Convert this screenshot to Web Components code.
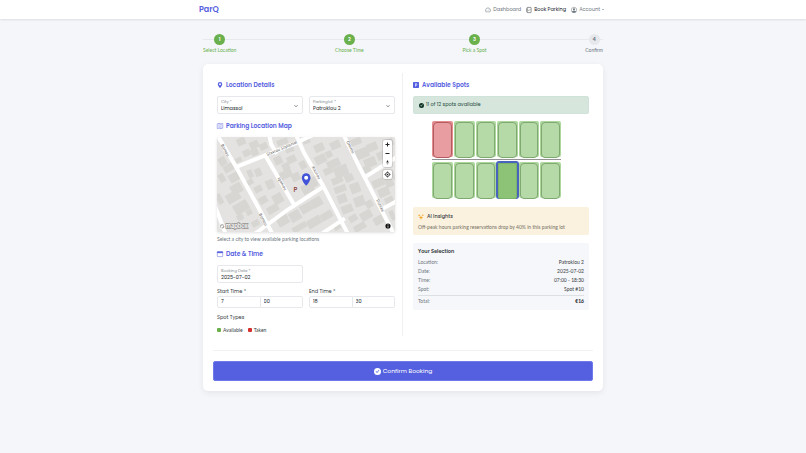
<!DOCTYPE html>
<html lang="en">
<head>
<meta charset="utf-8">
<meta name="viewport" content="width=device-width, initial-scale=1">
<title>ParQ – Book Parking</title>
<style>
:root{--brand:#5560e0;--green:#6ab04c;--red:#d32f2f;--ink:#343a40;--muted:#6c757d;--line:#e6e8ec;--small:Lato,"Open Sans",sans-serif}
*{box-sizing:border-box}
body{margin:0;min-height:100vh;background:#f4f6fa;color:var(--ink);font:5px/8px Poppins,Inter,"Open Sans",sans-serif}
</style>
</head>
<body>
<pq-page></pq-page>
<script>
const define=(name,css,html,setup)=>{
  const t=document.createElement('template');
  t.innerHTML=`<style>*{box-sizing:border-box}:host{display:block}${css}</style>${html}`;
  customElements.define(name,class extends HTMLElement{
    connectedCallback(){
      if(this.shadowRoot)return;
      const root=this.attachShadow({mode:'open'});
      root.append(t.content.cloneNode(true));
      root.querySelectorAll('[data-attr]').forEach(e=>e.textContent=this.getAttribute(e.dataset.attr));
      if(setup)setup(root,this);
    }
  });
};

/* 16x16 icon set */
const icons={
  gauge:'<path d="M2.5 13a6.800 6.800 0 1 1 11 0z" fill="none" stroke="currentColor" stroke-width="1.300"/><path d="M8 9.500l3-3M8 4v1.500M4 8.500h1.200M11 8.500h1.200" stroke="currentColor" stroke-width="1.200"/>',
  journal:'<rect x="2.700" y="1" width="11" height="14" rx="1.500" fill="none" stroke="currentColor" stroke-width="1.300"/><path d="M1 5h3M1 8h3M1 11h3M6.200 8l1.600 1.600L11 6.400" fill="none" stroke="currentColor" stroke-width="1.300"/>',
  person:'<circle cx="8" cy="8" r="7.300" fill="none" stroke="currentColor" stroke-width="1.300"/><circle cx="8" cy="6.300" r="2.800" fill="currentColor"/><path d="M2.500 12.500C3.500 10.500 5 10 8 10s4.500.5 5.500 2.500A7.300 7.300 0 0 1 8 15.300a7.300 7.300 0 0 1-5.500-2.800z" fill="currentColor"/>',
  pin:'<path fill="currentColor" fill-rule="evenodd" d="M8 16s6-5.700 6-10A6 6 0 0 0 2 6c0 4.300 6 10 6 10zm0-7.500a2.700 2.700 0 1 0 0-5.400 2.700 2.700 0 0 0 0 5.400z"/>',
  map:'<path d="M.7 2.200l4.800-1 5 1 4.800-1v12.600l-4.800 1-5-1-4.800 1zM5.500 1.200v12.600M10.500 2.200v12.600" fill="none" stroke="currentColor" stroke-width="1.200" stroke-linejoin="round"/>',
  calendar:'<rect x=".8" y="1.800" width="14.400" height="13.200" rx="1.600" fill="none" stroke="currentColor" stroke-width="1.300"/><path d="M1 2h14v3H1zM3.500 0v2M12.500 0v2" fill="currentColor" stroke="currentColor"/>',
  parking:'<path fill="currentColor" fill-rule="evenodd" d="M2 0h12a2 2 0 0 1 2 2v12a2 2 0 0 1-2 2H2a2 2 0 0 1-2-2V2a2 2 0 0 1 2-2zm3.500 4v8.200h1.600V9.500h1.600c3.700 0 3.700-5.500 0-5.500zm1.600 1.300h1.300c1.800 0 1.800 2.900 0 2.900H7.100z"/>',
  check:'<path fill="currentColor" fill-rule="evenodd" d="M8 0a8 8 0 1 1 0 16A8 8 0 0 1 8 0zm4.200 5-1-.9-4.200 5-2.300-2.200-1 1 3.400 3.400z"/>',
  spark:'<path fill="currentColor" d="M8 4l1.600 3.800L14 9.500l-4.400 1.600L8 16l-1.600-4.900L2 9.500l4.400-1.700zM3 0l1 2.500L7 3.500 4 4.500 3 7.500 2 4.500 0 3.500l2-1zM13 0l.9 2L16 3l-2.100.9L13 6l-.9-2.100L10 3l2.100-1z"/>'
};
define('pq-icon',`:host{display:inline-block;flex:none;width:var(--size,6px);height:var(--size,6px)}svg{display:block;width:100%;height:100%;overflow:visible}`,
 `<svg viewBox="0 0 16 16" aria-hidden="true"></svg>`,(r,h)=>r.querySelector('svg').innerHTML=icons[h.getAttribute('name')]);

define('pq-nav',`:host{background:#fff;box-shadow:0 1px 2px #0000001a}
nav{display:flex;align-items:center;justify-content:space-between;max-width:408px;height:19px;margin:0 auto;padding-right:3px}
a{color:inherit;text-decoration:none;display:flex;align-items:center;gap:2px}
.brand{font-size:8px;font-weight:600;color:var(--brand)}
.links{display:flex;gap:5px;font-size:5px;color:var(--muted)}
.on{color:#212529}
.caret{border:1px solid transparent;border-top-color:currentColor;margin-top:1px}`,
`<nav><a class="brand" href="#">ParQ</a><div class="links">
<a href="#"><pq-icon name="gauge"></pq-icon>Dashboard</a>
<a href="#" class="on"><pq-icon name="journal"></pq-icon>Book Parking</a>
<a href="#"><pq-icon name="person"></pq-icon>Account<span class="caret"></span></a></div></nav>`);

define('pq-step',`:host{display:grid;justify-items:center;gap:2px;color:var(--green)}
b{display:grid;place-items:center;width:11px;height:11px;border-radius:50%;background:var(--green);color:#fff;font-weight:600}
span{font:5px/7px var(--small)}
:host([pending]){color:var(--muted)}:host([pending]) b{background:#e6e8ec;color:var(--muted)}`,
`<b data-attr="n"></b><span><slot></slot></span>`);
define('pq-steps',`:host{display:flex;justify-content:space-between;background:linear-gradient(#e6e9ed,#e6e9ed) 0 5px/100% 1px no-repeat}`,`<slot></slot>`);

define('pq-heading',`h2{display:flex;align-items:center;gap:3px;margin:0;font-size:6px;line-height:10px;font-weight:600;color:var(--brand)}`,
`<h2><pq-icon></pq-icon><slot></slot></h2>`,(r,h)=>{const i=document.createElement('pq-icon');i.setAttribute('name',h.getAttribute('icon'));r.querySelector('pq-icon').replaceWith(i)});

const box=`.box{display:grid;height:18px;padding:2px 4px 2px 3px;border:1px solid var(--line);border-radius:2px;background:#fff}
label{font-size:4px;line-height:6px;color:#80868c}
select,input{width:100%;min-width:0;height:7px;padding:0;border:0;outline:0;background:none;appearance:none;color:#212529;font:5px/7px Poppins,Inter,"Open Sans",sans-serif}`;
define('pq-select',box+`.box{grid-template-columns:1fr auto;align-items:center}label,select{grid-column:1}svg{grid-area:1/2/3/3;width:4px;height:4px}`,
`<div class="box"><label for="f" data-attr="label"></label><select id="f"><option data-attr="value"></option></select><svg viewBox="0 0 16 16" aria-hidden="true"><path d="M2 5l6 6 6-6" fill="none" stroke="#343a40" stroke-width="2.500"/></svg></div>`);
define('pq-field',box,`<div class="box"><label for="f" data-attr="label"></label><input id="f"></div>`,(r,h)=>r.querySelector('input').value=h.getAttribute('value'));
define('pq-time',`label{display:block;line-height:8px}i{font-style:normal;color:var(--muted)}
div{display:flex}input{flex:1;min-width:0;width:0;height:12px;padding:0 3px;border:1px solid var(--line);border-radius:2px 0 0 2px;outline:0;color:#212529;background:#fff;font:5px/8px Poppins,Inter,"Open Sans",sans-serif}
input+input{border-left:0;border-radius:0 2px 2px 0}`,
`<label for="h"><slot></slot> <i>*</i></label><div><input id="h" aria-label="Hour"><input aria-label="Minute"></div>`,
(r,h)=>{const [a,b]=r.querySelectorAll('input');a.value=h.getAttribute('hour');b.value=h.getAttribute('minute')});

/* building footprints: x y width height angle */
const buildings=[[60,3,26,22,-24],[98,12,28,22,-24],[128,18,24,20,-24],[78,38,22,20,-24],[102,34,22,22,-24],[55,62,20,14,-24],[20,82,30,22,-30],[36,108,32,26,-30],[6,60,22,26,-30],[42,140,34,30,-30],[28,165,42,30,-30],[50,195,46,32,-30],[6,110,18,26,-30],[0,170,16,32,-30],[60,232,20,18,-30],[88,218,18,16,-30],[104,250,24,18,-30],[92,98,16,24,-24],[114,94,20,24,-24],[86,128,24,16,-30],[112,146,24,20,-28],[126,178,26,22,-30],[150,205,36,22,-30],[168,170,30,30,-30],[148,128,24,28,-24],[180,6,34,18,-20],[205,26,26,20,-20],[172,58,24,24,-26],[196,78,22,22,-26],[210,56,28,22,-26],[188,100,38,24,-26],[224,108,26,24,-26],[248,72,20,24,-28],[254,140,36,28,-28],[280,120,20,30,-28],[180,235,36,30,-30],[218,222,34,30,-30],[250,200,36,26,-30],[282,182,34,28,-30],[225,262,46,18,-30],[270,242,44,26,-30],[310,225,38,22,-30],[258,4,22,16,-20],[292,20,30,24,-24],[294,54,34,26,-26],[326,42,20,20,-26],[340,12,30,24,-24],[330,68,40,24,-24],[320,92,28,20,-26],[352,86,42,34,-20],[344,120,34,20,-24],[384,112,26,22,-24],[352,146,36,20,-20],[400,138,30,30,-20],[362,172,28,26,-20],[412,178,32,30,-20],[374,204,34,24,-20],[446,190,22,22,-30],[396,234,26,20,-30],[430,222,36,26,-30],[470,238,30,24,-30],[410,260,38,20,-30],[350,258,20,20,-30],[400,4,34,20,-22],[416,34,40,30,-22],[442,62,36,28,-22],[450,18,32,24,-22],[480,44,26,24,-22],[500,6,30,22,-22],[440,86,22,20,-22],[466,126,36,24,-24],[484,152,34,26,-24],[505,180,26,24,-24],[505,122,24,28,-24],[524,100,10,30,-24],[520,220,14,30,-24]];
define('pq-map',`:host{position:relative;height:95px;border-radius:2px;overflow:hidden;background:#e4e3e1;box-shadow:0 1px 3px #0000001f}
.map{display:block;width:100%;height:100%}
.ctl{position:absolute;top:3px;right:3px;display:grid;gap:3px}
.grp{display:grid;border-radius:2px;background:#fff;box-shadow:0 0 0 1px #0000001a}
button{display:grid;place-items:center;width:9px;height:9px;padding:0;border:0;background:none}
button svg{width:7px;height:7px}
.info{position:absolute;right:4px;bottom:3px;width:6px;height:6px}.info svg{width:6px;height:6px}`,
`<svg class="map" viewBox="0 0 535 285" preserveAspectRatio="xMidYMid slice" role="img" aria-label="Map of the parking location">
<rect width="535" height="285" fill="#e4e3e1"/><g id="b" fill="#d7d6d3"></g>
<g fill="none" stroke="#fff" stroke-width="12"><path d="M-4-15 58 90 120 203 172 300M58 90 145 55 240 17 300-12M156-10 163 22 180 50M145 55 230 200M238-5 262 48 318 145 398 300M318 150 210 220 105 297M384 244 300 300M376-15 430 95 536 300M448 118 540 60M492 218 540 192M-6 205 28 295"/></g>
<g font-family="Inter,sans-serif" font-size="12" fill="#55534f" stroke="#fff" stroke-width="2" paint-order="stroke">
<text transform="translate(12 24) rotate(62)">Bomou</text><text transform="translate(126 232) rotate(62)">Bomou</text>
<text transform="translate(151 57) rotate(-23)">Stavrou Stylianidi</text>
<text transform="translate(183 124) rotate(62)">Igoniou</text><text transform="translate(284 89) rotate(62)">Xouriou</text>
<text transform="translate(388 14) rotate(63)">Omirou</text><text transform="translate(478 190) rotate(63)">Dunias</text></g>
<text x="230" y="166" font-family="Inter,sans-serif" font-size="18" font-weight="600" fill="#8c4343">P</text>
<path d="M268 146s-13-13-13-24a13 13 0 0 1 26 0c0 11-13 24-13 24z" fill="#4353d8"/><circle cx="268" cy="122" r="6" fill="#fff"/>
<circle cx="16" cy="268" r="8" fill="#a5a4a1" stroke="#fff" stroke-width="3"/><path d="M12 272c-1-6 3-9 8-7-1 5-4 8-8 7z" fill="#fff"/><text x="27" y="274" font-family="Inter,sans-serif" font-size="17" font-weight="600" fill="#fff" stroke="#8f8e8b" stroke-width="4" paint-order="stroke">mapbox</text></svg>
<div class="ctl"><div class="grp">
<button aria-label="Zoom in"><svg viewBox="0 0 14 14"><path d="M7 3v8M3 7h8" stroke="#222" stroke-width="2"/></svg></button>
<button aria-label="Zoom out"><svg viewBox="0 0 14 14"><path d="M3 7h8" stroke="#222" stroke-width="2"/></svg></button>
<button aria-label="Reset bearing"><svg viewBox="0 0 14 14"><path d="M4.500 7 7 2l2.500 5z" fill="#222"/><path d="M4.500 7.500 7 12l2.500-4.500z" fill="#aaa"/></svg></button></div>
<div class="grp"><button aria-label="Find my location"><svg viewBox="0 0 14 14"><circle cx="7" cy="7" r="4" fill="none" stroke="#222" stroke-width="1.500"/><circle cx="7" cy="7" r="1.700" fill="#222"/><path d="M7 1v2M7 11v2M1 7h2M11 7h2" stroke="#222" stroke-width="1.500"/></svg></button></div></div>
<button class="info" aria-label="Attribution"><svg viewBox="0 0 14 14"><circle cx="7" cy="7" r="6" fill="#111"/><path d="M7 3v2M7 6v5" stroke="#fff" stroke-width="1.600"/></svg></button>`,
r=>{r.querySelector('#b').innerHTML=buildings.map(([x,y,w,h,a])=>`<rect x="${x}" y="${y}" width="${w}" height="${h}" transform="rotate(${a} ${x+w/2} ${y+h/2})"/>`).join('')});

define('pq-legend',`:host{display:flex;align-items:center;gap:5px;font-family:var(--small)}span{display:flex;align-items:center;gap:2px}span::before{content:"";width:4px;height:4px;border-radius:1px;background:var(--green)}.t::before{background:var(--red)}`,`<span>Available</span><span class="t">Taken</span>`);

define('pq-alert',`:host{display:flex;align-items:center;gap:2px;height:18px;padding:0 5px;border:1px solid #cfe3da;border-radius:2px;background:#d6e6dd;color:#23493a}pq-icon{color:#0d3325;--size:5px}`,`<pq-icon name="check"></pq-icon><span><slot></slot></span>`);

define('pq-spots',`:host{width:73%;margin-left:11%}
.row{display:grid;grid-template-columns:repeat(6,1fr);gap:1px}
.row+.row{margin-top:2px;padding-top:2px;border-top:1px solid #929295}
button{height:36px;padding:1px;border:0;border-radius:2px;background:#aed79e}
button::before{content:"";display:block;height:100%;border:1px solid #7ea971;border-radius:4px;background:#b6d9a8}
.taken{background:#e58e92}.taken::before{border-color:#b65a61;background:#e89da0}
.sel{border:1px solid #4964bd;box-shadow:0 0 0 1px #4964bd;padding:0;background:#8ac274}.sel::before{background:#8dc377;border-color:#7cb36a;border-radius:2px}`,``,
r=>{for(let j=0;j<2;j++){const row=document.createElement('div');row.className='row';for(let i=1;i<7;i++){const n=j*6+i,b=document.createElement('button');b.type='button';b.setAttribute('aria-label','Spot '+n);b.className=n===1?'taken':n===10?'sel':'';row.append(b)}r.append(row)}});

define('pq-insight',`:host{padding:5px 5px 4px;border-radius:2px;background:#fbf1df}h3{display:flex;align-items:center;gap:3px;margin:0;font-size:5px;line-height:9px;font-weight:500}pq-icon{color:#f4a62a}p{margin:2px 0 0;font:5px/8px var(--small);color:#71705f}`,
`<h3><pq-icon name="spark"></pq-icon>AI Insights</h3><p><slot></slot></p>`);

define('pq-summary',`:host{padding:4px 5px;border-radius:2px;background:#f6f7fa}h3{margin:0 0 2px;font-size:5px;line-height:9px;font-weight:600}
dl{margin:0;font-family:var(--small)}div{display:flex;justify-content:space-between;line-height:9px}dt{color:var(--muted)}dd{margin:0}
div:last-child{margin-top:1px;padding-top:1px;border-top:1px solid #dcdfe3}div:last-child dd{font-weight:700;color:#212529}`,
`<h3>Your Selection</h3><dl><div><dt>Location:</dt><dd>Patroklou 2</dd></div><div><dt>Date:</dt><dd>2025-07-02</dd></div><div><dt>Time:</dt><dd>07:00 - 18:30</dd></div><div><dt>Spot:</dt><dd>Spot #10</dd></div><div><dt>Total:</dt><dd>€16</dd></div></dl>`);

define('pq-button',`button{display:flex;align-items:center;justify-content:center;gap:2px;width:100%;height:20px;border:1px solid #717aea;border-radius:2px;background:var(--brand);color:#fff;font:6px/10px Poppins,Inter,"Open Sans",sans-serif;--size:7px}`,
`<button type="button"><pq-icon name="check"></pq-icon><slot></slot></button>`);

define('pq-page',`main{max-width:400px;margin:0 auto;padding:15px 0}
.card{margin-top:10px;padding:9px 10px 10px;border-radius:5px;background:#fff;box-shadow:0 2px 6px #00000012}
.cols{display:grid;grid-template-columns:1fr 1fr}
.col{padding:7px 4px 2px}.left{padding-right:7px;border-right:1px solid #eff0f3}.right{padding-left:10px}
.pair{display:grid;grid-template-columns:1fr 1fr;gap:6px}
pq-heading+*{margin-top:6px}.pair+pq-heading{margin-top:7px}p+pq-heading{margin-top:6px}
p{margin:3px 0 0;font:5px/8px var(--small);color:var(--muted)}
.times{margin-top:5px}.types{margin:6px 0 4px}
pq-spots{margin-top:7px}pq-insight{margin-top:9px}pq-summary{margin-top:8px}
hr{margin:14px 0 10px;border:0;border-top:1px solid #f1f2f4}`,
`<pq-nav></pq-nav><main>
<pq-steps><pq-step n="1">Select Location</pq-step><pq-step n="2">Choose Time</pq-step><pq-step n="3">Pick a Spot</pq-step><pq-step n="4" pending>Confirm</pq-step></pq-steps>
<div class="card"><div class="cols"><div class="col left">
<pq-heading icon="pin">Location Details</pq-heading>
<div class="pair"><pq-select label="City *" value="Limassol"></pq-select><pq-select label="Parkinglot *" value="Patroklou 2"></pq-select></div>
<pq-heading icon="map">Parking Location Map</pq-heading>
<pq-map></pq-map><p>Select a city to view available parking locations</p>
<pq-heading icon="calendar">Date &amp; Time</pq-heading>
<div class="pair"><pq-field label="Booking Date *" value="2025-07-02"></pq-field></div>
<div class="pair times"><pq-time hour="7" minute="00">Start Time</pq-time><pq-time hour="18" minute="30">End Time</pq-time></div>
<div class="types">Spot Types</div><pq-legend></pq-legend></div>
<div class="col right"><pq-heading icon="parking">Available Spots</pq-heading>
<pq-alert>11 of 12 spots available</pq-alert><pq-spots></pq-spots>
<pq-insight>Off-peak hours parking reservations drop by 40% in this parking lot</pq-insight><pq-summary></pq-summary></div></div>
<hr><pq-button>Confirm Booking</pq-button></div></main>`);
</script>
</body>
</html>
